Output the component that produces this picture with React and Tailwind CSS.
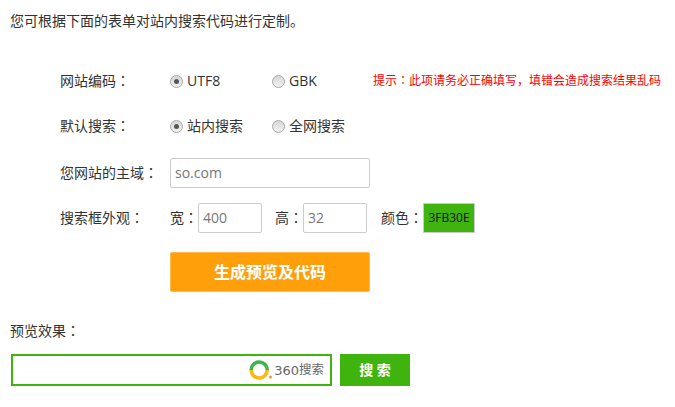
const Colon = () => <span className="leading-none font-['Noto_Sans_CJK_TC',sans-serif]">：</span>;

const Radio = ({ checked, label }) => (
  <label className="flex items-center">
    <span className="w-[13px] h-[13px] rounded-full border border-[#a9a9a9] bg-gradient-to-b from-[#d6d6d6] to-[#f2f2f2] flex items-center justify-center shrink-0">
      {checked && <span className="w-[5px] h-[5px] rounded-full bg-[#555]"></span>}
    </span>
    <span className="ml-[4px]">{label}</span>
  </label>
);

const Row = ({ label, className, children }) => (
  <div className={`flex items-center ${className}`}>
    <div className="w-[110px] shrink-0">{label}<Colon /></div>
    {children}
  </div>
);

const Field = ({ value, width }) => (
  <input
    readOnly
    value={value}
    className={`${width} h-[30px] border border-[#ccc] rounded-[2px] px-[4px] pb-[2px] text-[#777] outline-none`}
  />
);

export default function App() {
  return (
    <div className="w-[675px] h-[407px] overflow-hidden bg-white text-[14px] leading-[20px] text-[#333] font-['Open_Sans','Noto_Sans_CJK_SC',sans-serif]">
      <p className="pl-[10px] pt-[11px]">您可根据下面的表单对站内搜索代码进行定制。</p>

      <div className="pl-[60px] mt-[40px]">
        <Row label="网站编码" className="h-[20px]">
          <div className="w-[102px]"><Radio checked label="UTF8" /></div>
          <div className="w-[101px]"><Radio label="GBK" /></div>
          <span className="text-[12px] text-[#f00]">提示<Colon />此项请务必正确填写，填错会造成搜索结果乱码</span>
        </Row>
        <Row label="默认搜索" className="h-[20px] mt-[25px]">
          <div className="w-[102px]"><Radio checked label="站内搜索" /></div>
          <Radio label="全网搜索" />
        </Row>
        <Row label="您网站的主域" className="mt-[22px]">
          <Field value="so.com" width="w-[200px]" />
        </Row>
        <Row label="搜索框外观" className="mt-[15px]">
          <span>宽<Colon /></span>
          <Field value="400" width="w-[64px]" />
          <span className="ml-[13px]">高<Colon /></span>
          <Field value="32" width="w-[64px]" />
          <span className="ml-[14px]">颜色<Colon /></span>
          <div className="w-[52px] h-[30px] border border-[#ccc] bg-[#3fb30e] text-[#111] text-[12px] flex items-center justify-center">3FB30E</div>
        </Row>
        <div className="pl-[110px] mt-[19px]">
          <button className="w-[200px] h-[40px] bg-[#ffa00a] border border-[#ffb74a] rounded-[2px] text-white text-[16px] font-bold">生成预览及代码</button>
        </div>
      </div>

      <p className="pl-[10px] mt-[29px]">预览效果<Colon /></p>
      <div className="flex pl-[11px] mt-[13px]">
        <div className="w-[321px] h-[32px] border-[2px] border-[#3fb30e] flex items-center justify-end pr-[6px]">
          <svg width="24" height="22" viewBox="0 0 24 22" className="mr-[1px]">
            <path d="M2.2 11A8 8 0 1 1 18.2 11" fill="none" stroke="#3cb54a" strokeWidth="3.6" />
            <path d="M2.2 11A8 8 0 0 0 18.2 11" fill="none" stroke="#fdb813" strokeWidth="3.6" />
            <circle cx="21.5" cy="18" r="1.5" fill="#f39c12" />
          </svg>
          <span className="text-[13px] text-[#666] leading-none flex items-center">
            <span className="font-['DejaVu_Sans',sans-serif]">360</span>
            <span className="text-[12.5px]">搜索</span>
          </span>
        </div>
        <button className="w-[70px] h-[32px] ml-[8px] bg-[#3fb30e] text-white text-[14px] font-bold">搜 索</button>
      </div>
    </div>
  );
}
